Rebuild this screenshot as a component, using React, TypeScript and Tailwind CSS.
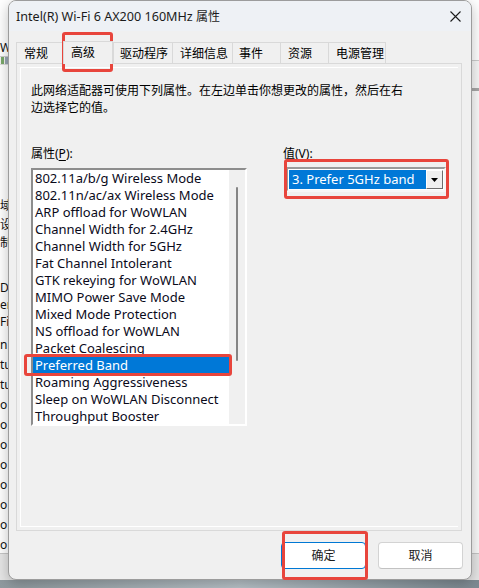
const properties = [
  "802.11a/b/g Wireless Mode",
  "802.11n/ac/ax Wireless Mode",
  "ARP offload for WoWLAN",
  "Channel Width for 2.4GHz",
  "Channel Width for 5GHz",
  "Fat Channel Intolerant",
  "GTK rekeying for WoWLAN",
  "MIMO Power Save Mode",
  "Mixed Mode Protection",
  "NS offload for WoWLAN",
  "Packet Coalescing",
  "Preferred Band",
  "Roaming Aggressiveness",
  "Sleep on WoWLAN Disconnect",
  "Throughput Booster",
];

const tabs = [
  { label: "常规", w: "w-[47px]" },
  { label: "高级", w: "w-[50px]", active: true },
  { label: "驱动程序", w: "w-[59px]", pl: "pl-[6px]" },
  { label: "详细信息", w: "w-[60px]" },
  { label: "事件", w: "w-[48px]", pl: "pl-[6px]" },
  { label: "资源", w: "w-[48px]" },
  { label: "电源管理", w: "w-[58px]" },
];

// bits of the window lying behind the dialog; the dialog covers the rest
const behindLines = [
  { t: "域", top: "mt-[132px]" },
  { t: "设", top: "mt-[2px]" },
  { t: "制", top: "mt-[1px]" },
  { t: "De", top: "mt-[28px]" },
  { t: "er", top: "mt-[0px]" },
  { t: "Fi", top: "mt-[0px]" },
  { t: "n -", top: "mt-[6px]" },
  { t: "tu", top: "mt-[3px]" },
  { t: "tu", top: "mt-[3px]" },
  { t: "o", top: "mt-[3px]" },
  { t: "o", top: "mt-[3px]" },
  { t: "o", top: "mt-[3px]" },
  { t: "o", top: "mt-[3px]" },
  { t: "o", top: "mt-[3px]" },
  { t: "o", top: "mt-[3px]" },
  { t: "o", top: "mt-[3px]" },
  { t: "o", top: "mt-[3px]" },
];

function LeftEdge() {
  return (
    <div className="w-[8px] flex flex-col text-[12px] leading-[17px] text-[#111]">
      <div className="mt-[39px] leading-[17px]">W</div>
      <div className="h-px bg-[#cfcfcf]" />
      <div className="h-[13px] bg-[#f3f3f3] flex items-center gap-[1px] pl-[1px]">
        <div className="w-[3px] h-[7px] bg-[#7aa86a]" />
        <div className="w-[3px] h-[7px] bg-[#9aa6b4]" />
      </div>
      <div className="h-px bg-[#dcdcdc]" />
      {behindLines.map((l, i) => (
        <div key={i} className={`${l.top} whitespace-nowrap`}>
          {l.t}
        </div>
      ))}
    </div>
  );
}

function RightEdge() {
  return (
    <div className="w-[7px] flex flex-col">
      <div className="h-[60px] bg-white" />
      <div className="h-px bg-[#cdcdcd]" />
      <div className="h-[27px] bg-[#f7f7f7]" />
      <div className="h-[3px] bg-[#a7a7a7]" />
      <div className="flex-1 bg-[#fafafa]" />
    </div>
  );
}

function CloseIcon() {
  return (
    <svg width="11" height="11" viewBox="0 0 11 11" fill="none">
      <path d="M0.5 0.5 L10.5 10.5 M10.5 0.5 L0.5 10.5" stroke="#1b1b1b" strokeWidth="1.1" />
    </svg>
  );
}

function TabStrip() {
  return (
    <div className="flex items-end h-[23px]">
      {tabs.map((tab) =>
        tab.active ? (
          <div
            key={tab.label}
            className={`${tab.w} h-[23px] -mb-px relative z-10 pl-[7px] pt-[2px] leading-[17px] bg-[#f0f0f0] border border-b-0 border-[#d9d9d9]`}
          >
            {tab.label}
          </div>
        ) : (
          <div
            key={tab.label}
            className={`${tab.w} h-[21px] ${tab.pl ?? "pl-[7px]"} pt-[2px] leading-[17px] bg-[#f0f0f0] border-t border-l border-[#d9d9d9] last:border-r`}
          >
            {tab.label}
          </div>
        )
      )}
    </div>
  );
}

function PropertyList() {
  return (
    <div className="w-[216px] h-[258px] border-2 border-t-[#8d8d8d] border-l-[#8d8d8d] border-r-white border-b-white bg-white flex">
      <div className="flex-1 flex flex-col text-[13px]">
        {properties.map((p) => (
          <div
            key={p}
            className={`h-[17px] leading-[17px] pl-[2px] whitespace-nowrap ${
              p === "Preferred Band" ? "bg-[#0078d7] text-white" : "text-[#0a0a1a]"
            }`}
          >
            {p}
          </div>
        ))}
      </div>
      <div className="w-[16px] bg-[#f0f0f0] flex justify-center pt-[17px]">
        <div className="w-[2px] h-[174px] rounded-full bg-[#858585]" />
      </div>
    </div>
  );
}

function ValueCombo() {
  return (
    <div className="ml-[3px] w-[160px] h-[25px] border-2 border-t-[#9a9a9a] border-l-[#9a9a9a] border-r-[#f7f7f7] border-b-[#f7f7f7] bg-white flex p-[1px]">
      <div className="flex-1 bg-[#0078d7] text-white text-[13px] pl-[3px] leading-[19px] whitespace-nowrap">
        3. Prefer 5GHz band
      </div>
      <div className="w-[17px] bg-[#f0f0f0] border border-t-white border-l-white border-r-[#6e6e6e] border-b-[#6e6e6e] flex items-center justify-center">
        <svg width="7" height="4" viewBox="0 0 7 4">
          <path d="M0 0 H7 L3.5 4 Z" fill="#000" />
        </svg>
      </div>
    </div>
  );
}

function Dialog() {
  return (
    <div className="absolute left-[8px] top-0 w-[464px] h-[580px] rounded-[8px] border border-[#9c9c9c] bg-[#f0f0f0] overflow-hidden flex flex-col shadow-[0_4px_14px_rgba(0,0,0,0.25)]">
      {/* title bar */}
      <div className="h-[30px] bg-[#eef1f5] flex items-center justify-between pl-[7px] pr-[10px]">
        <span className="text-[#1b1b1b] leading-[17px]">
          <span className="text-[12.6px]">Intel(R) Wi-Fi 6 AX200 160MHz </span>
          <span className="text-[12px]">属性</span>
        </span>
        <CloseIcon />
      </div>

      {/* body */}
      <div className="flex-1 px-[7px] pt-[9px] flex flex-col">
        <TabStrip />
        <div className="w-[446px] h-[468px] border border-[#d9d9d9] p-[3px]">
          <div className="h-full border-l border-t border-b border-white pl-[10px] pt-[14px]">
            <p className="leading-[17px]">
              此网络适配器可使用下列属性。在左边单击你想更改的属性，然后在右
              <br />
              边选择它的值。
            </p>
            <div className="mt-[29px] flex gap-[36px]">
              <div className="flex flex-col">
                <div className="leading-[17px]">
                  属性(<span className="underline underline-offset-2">P</span>):
                </div>
                <div className="mt-[6px]">
                  <PropertyList />
                </div>
              </div>
              <div className="flex flex-col">
                <div className="leading-[17px]">
                  值(<span className="underline underline-offset-2">V</span>):
                </div>
                <div className="mt-[5px]">
                  <ValueCombo />
                </div>
              </div>
            </div>
          </div>
        </div>

        {/* dialog buttons */}
        <div className="mt-[11px] mr-[1px] flex justify-end gap-[12px]">
          <button className="w-[85px] h-[27px] rounded-[4px] bg-white border border-[#0078d4] text-[12px] text-[#1b1b1b]">
            确定
          </button>
          <button className="w-[85px] h-[27px] rounded-[4px] bg-white border border-[#d3d3d3] border-b-[#c2c2c2] text-[12px] text-[#1b1b1b]">
            取消
          </button>
        </div>
      </div>
    </div>
  );
}

export default function App() {
  return (
    <div className="relative w-[479px] h-[588px] overflow-hidden font-['Noto_Sans','Noto_Sans_CJK_SC',sans-serif] text-[12px] text-black">
      {/* desktop with another window under the dialog */}
      <div className="flex flex-col h-full">
        <div className="h-[553px] bg-white flex">
          <LeftEdge />
          <div className="flex-1" />
          <RightEdge />
        </div>
        <div className="h-px bg-[#c6c6c6]" />
        <div className="h-[26px] bg-[#e6e6e6]" />
        <div className="h-[8px] bg-linear-to-r from-[#8f9a9f] via-[#b9c4ca] to-[#7d8a92]" />
      </div>

      <Dialog />

      {/* red markers */}
      <div className="absolute left-[62px] top-[32px] w-[51px] h-[40px] border-[3px] border-[#e8453c] rounded-[3px]" />
      <div className="absolute left-[284px] top-[159px] w-[165px] h-[40px] border-[3px] border-[#e8453c] rounded-[3px]" />
      <div className="absolute left-[24px] top-[354px] w-[208px] h-[22px] border-[3px] border-[#e8453c] rounded-[3px]" />
      <div className="absolute left-[282px] top-[531px] w-[86px] h-[49px] border-[3px] border-[#e8453c] rounded-[3px]" />
    </div>
  );
}
